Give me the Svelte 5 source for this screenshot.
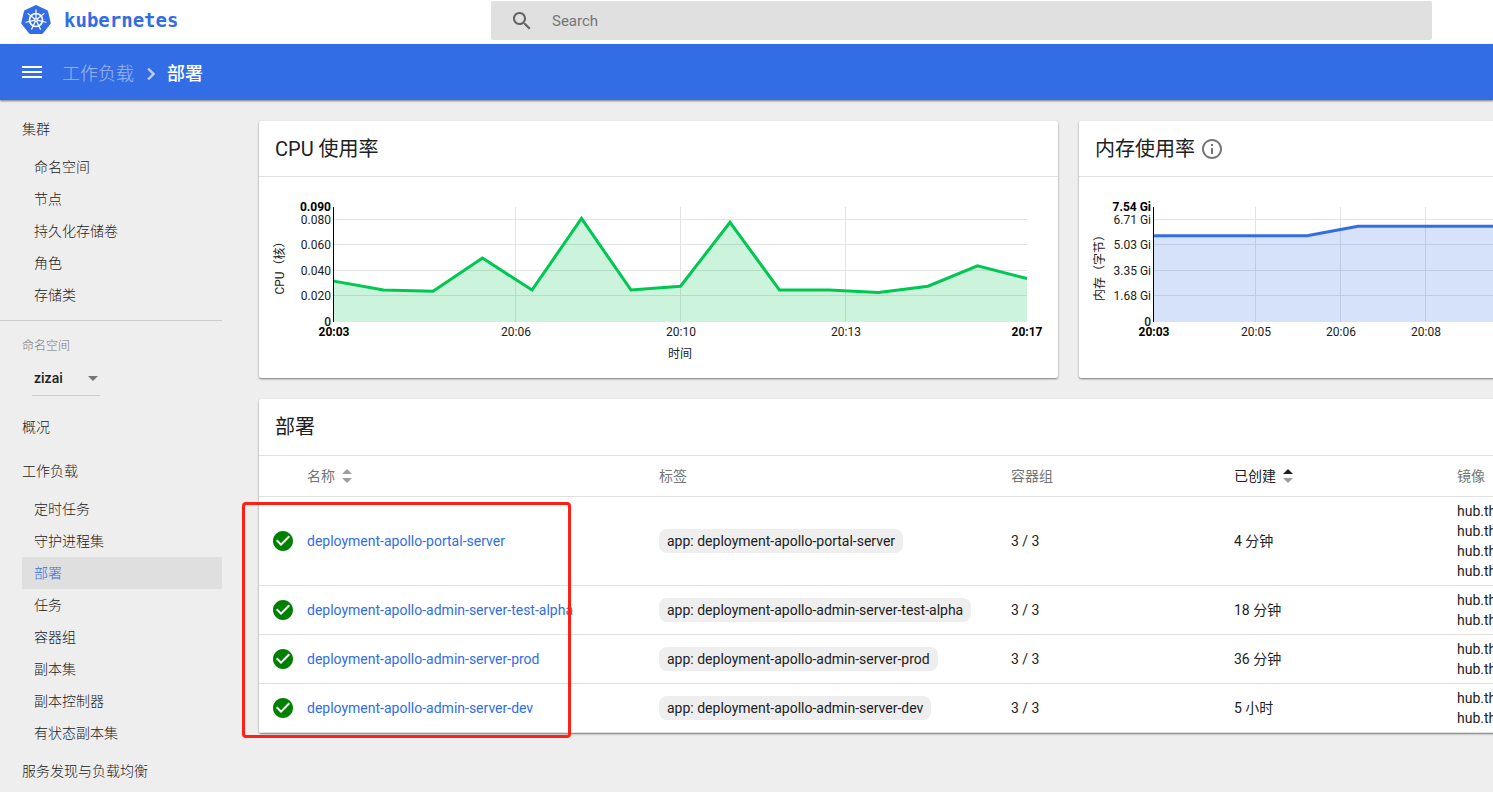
<script>
  const clusterItems = ["命名空间", "节点", "持久化存储卷", "角色", "存储类"];
  const workloadItems = [
    "定时任务",
    "守护进程集",
    "部署",
    "任务",
    "容器组",
    "副本集",
    "副本控制器",
    "有状态副本集",
  ];

  const deployments = [
    { name: "deployment-apollo-portal-server", pods: "3 / 3", age: "4 分钟", images: 4 },
    { name: "deployment-apollo-admin-server-test-alpha", pods: "3 / 3", age: "18 分钟", images: 2 },
    { name: "deployment-apollo-admin-server-prod", pods: "3 / 3", age: "36 分钟", images: 2 },
    { name: "deployment-apollo-admin-server-dev", pods: "3 / 3", age: "5 小时", images: 2 },
  ];

  const cpu = {
    axis: "CPU（核）",
    xAxis: "时间",
    color: "#00c752",
    max: 0.09,
    maxLabel: "0.090",
    step: 49.5,
    values: [
      0.032, 0.025, 0.024, 0.05, 0.025, 0.081, 0.025, 0.028, 0.078, 0.025, 0.025, 0.023, 0.028,
      0.044, 0.034,
    ],
    yTicks: [
      [0.02, "0.020"],
      [0.04, "0.040"],
      [0.06, "0.060"],
      [0.08, "0.080"],
    ],
    xTicks: [
      [182, "20:06"],
      [347, "20:10"],
      [512, "20:13"],
    ],
  };

  const memory = {
    axis: "内存（字节）",
    color: "#326de6",
    max: 7.54,
    maxLabel: "7.54 Gi",
    step: 51,
    values: [5.65, 5.65, 5.65, 5.65, 6.28, 6.27, 6.28, 6.28, 6.27, 6.28, 6.28, 6.27, 6.28, 6.28],
    yTicks: [
      [1.68, "1.68 Gi"],
      [3.35, "3.35 Gi"],
      [5.03, "5.03 Gi"],
      [6.71, "6.71 Gi"],
    ],
    xTicks: [
      [102, "20:05"],
      [187, "20:06"],
      [272, "20:08"],
    ],
  };

  // plot area inside the 799x201 chart
  const left = 75;
  const right = 768;
  const top = 30;
  const bottom = 145;

  const yPos = (chart, v) => bottom - (v / chart.max) * (bottom - top);
  const linePoints = (chart) =>
    chart.values.map((v, i) => `${left + i * chart.step},${yPos(chart, v)}`).join(" ");

  // seven spokes of the logo wheel
  const spokes = [0, 1, 2, 3, 4, 5, 6].map((i) => (i * 360) / 7);

  let active = "部署";
  let namespace = "zizai";
  let search = "";
</script>

<style>
  :global(body) {
    overflow: hidden;
    background: #eee;
  }

  .app {
    height: 100vh;
    display: flex;
    flex-direction: column;
    overflow: hidden;
    font-family: Roboto, "Noto Sans CJK SC", sans-serif;
    font-size: 14px;
    line-height: 20px;
    color: #212121;
  }

  a {
    color: inherit;
    text-decoration: none;
  }

  button,
  input,
  select {
    font: inherit;
    color: inherit;
    border: 0;
    padding: 0;
    background: none;
    outline: none;
  }

  svg {
    display: block;
  }

  header {
    flex: none;
    display: flex;
    align-items: flex-start;
    height: 44px;
    background: #fff;
  }

  .logo {
    display: flex;
    align-items: center;
    gap: 12px;
    width: 471px;
    height: 40px;
    padding-left: 20px;
    box-sizing: border-box;
    color: #326de6;
    font: bold 19px/24px "DejaVu Sans Mono", monospace;
  }

  .search {
    flex: 1;
    display: flex;
    align-items: center;
    gap: 18px;
    height: 39px;
    margin: 1px 61px 0 20px;
    padding-left: 19px;
    border-radius: 2px;
    background: #e0e0e0;
  }

  .search input {
    flex: 1;
    font-size: 15px;
  }

  .search input::placeholder {
    color: #757575;
    opacity: 1;
  }

  .toolbar {
    flex: none;
    position: relative;
    display: flex;
    align-items: center;
    height: 56px;
    padding-left: 20px;
    background: #326de6;
    color: #fff;
    font-size: 18px;
    box-shadow: 0 1px 2px rgba(0, 0, 0, 0.5);
  }

  .toolbar nav {
    display: flex;
    align-items: center;
    margin-left: 18px;
    padding-top: 3px;
  }

  .toolbar nav svg {
    margin: 0 4px 0 5px;
  }

  .parent {
    opacity: 0.5;
    font-weight: 300;
  }

  .current {
    font-weight: 500;
  }

  .content {
    flex: 1;
    display: flex;
    min-height: 0;
  }

  .sidebar {
    flex: none;
    width: 222px;
    padding-top: 7px;
    font-weight: 300;
  }

  .sidebar a {
    display: block;
    margin-left: 22px;
    line-height: 44px;
  }

  .sidebar a.item {
    padding-left: 12px;
    line-height: 32px;
  }

  .sidebar a.active {
    background: #dfdfdf;
    color: #326de6;
  }

  .sidebar hr {
    margin: 9px 0 0;
    border: 0;
    border-top: 1px solid #ccc;
  }

  .namespace {
    display: flex;
    flex-direction: column;
    align-items: flex-start;
    padding: 15px 0 9px 22px;
  }

  .namespace label {
    font-size: 12px;
    color: #757575;
  }

  .select {
    position: relative;
    margin: 5px 0 0 10px;
    border-bottom: 1px solid #ccc;
  }

  .select select {
    appearance: none;
    width: 68px;
    height: 34px;
    padding: 0 0 0 2px;
    font-size: 14px;
    font-weight: 500;
  }

  .select::after {
    content: "";
    position: absolute;
    right: 2px;
    top: 15px;
    border: 5px solid transparent;
    border-top-color: #757575;
    border-bottom: 0;
    pointer-events: none;
  }

  main {
    flex: 1;
    min-width: 0;
    padding: 21px 0 0 37px;
    overflow: hidden;
  }

  .cards {
    display: grid;
    grid-template-columns: repeat(2, minmax(799px, 1fr));
    gap: 21px;
  }

  .card {
    position: relative;
    background: #fff;
    border-radius: 2px;
    box-shadow: 0 1px 2px rgba(0, 0, 0, 0.5);
  }

  .wide {
    grid-column: 1 / -1;
  }

  h2 {
    display: flex;
    align-items: center;
    gap: 5px;
    height: 55px;
    margin: 0;
    padding: 0 16px;
    border-bottom: 1px solid #e0e0e0;
    font-size: 20px;
    font-weight: 400;
  }

  .wide h2 {
    height: 56px;
  }

  .chart {
    width: 100%;
    font-size: 12px;
  }

  .chart text {
    fill: #212121;
  }

  .chart .edge {
    fill: #000;
    font-weight: 700;
  }

  .chart .first {
    font-weight: 500;
  }

  .grid {
    stroke: #e3e3e3;
  }

  .axis {
    stroke: #000;
  }

  table {
    width: 100%;
    table-layout: fixed;
    border-collapse: collapse;
    text-align: left;
  }

  .status {
    width: 48px;
  }

  .col-wide {
    width: 352px;
  }

  .col {
    width: 223px;
  }

  th,
  td {
    padding: 0;
    white-space: nowrap;
  }

  th {
    height: 40px;
    border-bottom: 1px solid #e0e0e0;
    font-weight: 400;
    color: #757575;
  }

  th button {
    display: flex;
    align-items: center;
    gap: 7px;
    cursor: pointer;
  }

  th .sorted {
    color: #212121;
  }

  td {
    padding: 4px 0;
    border-bottom: 1px solid #e0e0e0;
  }

  td:first-child {
    padding-left: 12px;
  }

  td a {
    color: #326de6;
  }

  .chip {
    display: inline-block;
    padding: 2px 8px;
    border-radius: 8px;
    background: #eee;
  }

  .highlight {
    position: absolute;
    left: -17px;
    top: 103px;
    bottom: -5px;
    width: 323px;
    border: 3px solid #ff2116;
    border-radius: 4px;
    pointer-events: none;
  }
</style>

{#snippet sortIcon(up)}
  <svg width="10" height="14" viewBox="0 0 10 14">
    <path d="M0 5L5 0l5 5z" fill={up ? "#212121" : "#9e9e9e"} />
    <path d="M0 9l5 5 5-5z" fill="#9e9e9e" />
  </svg>
{/snippet}

{#snippet lineChart(chart)}
  <svg class="chart" viewBox="0 0 799 201">
    {#each chart.yTicks as [v, label]}
      {@const y = Math.round(yPos(chart, v)) - 0.5}
      <line class="grid" x1={left} x2={right} y1={y} y2={y} />
      <text x={left - 3} y={y + 4} text-anchor="end">{label}</text>
    {/each}
    {#each chart.xTicks as [x, label]}
      <line class="grid" x1={left + x - 0.5} x2={left + x - 0.5} y1={top} y2={bottom} />
      <text x={left + x} y="159" text-anchor="middle">{label}</text>
    {/each}
    <polygon
      points="{left},{bottom} {linePoints(chart)} {right},{bottom}"
      fill={chart.color}
      fill-opacity="0.2"
    />
    <polyline points={linePoints(chart)} fill="none" stroke={chart.color} stroke-width="3" />
    <line class="axis" x1={left - 0.5} x2={left - 0.5} y1={top} y2={bottom} />
    <text class="edge" x={left - 3} y="34" text-anchor="end">{chart.maxLabel}</text>
    <text class="first" x={left - 3} y="149" text-anchor="end">0</text>
    <text class="edge" x={left} y="159" text-anchor="middle">20:03</text>
    <text class="edge" x={right} y="159" text-anchor="middle">20:17</text>
    {#if chart.xAxis}
      <text x="421" y="181" text-anchor="middle">{chart.xAxis}</text>
    {/if}
    <text transform="translate(25 88) rotate(-90)" text-anchor="middle">{chart.axis}</text>
  </svg>
{/snippet}

<div class="app">
  <header>
    <a class="logo" href="#/">
      <svg width="32" height="32" viewBox="-16 -16 32 32" fill="none">
        <path
          d="M0-13.5L10.6-8.4 13.2 3 5.9 12.4H-5.9L-13.2 3-10.6-8.4z"
          fill="#326de6"
          stroke="#326de6"
          stroke-width="3"
          stroke-linejoin="round"
        />
        <g stroke="#fff" stroke-linecap="round">
          <circle r="6.5" stroke-width="1.7" />
          {#each spokes as angle}
            <path d="M0-2V-10.2" stroke-width="1.2" transform="rotate({angle})" />
          {/each}
        </g>
        <circle r="2" fill="#fff" />
        <circle r="0.8" fill="#326de6" />
      </svg>
      <span>kubernetes</span>
    </a>
    <div class="search">
      <svg width="24" height="24" viewBox="0 0 24 24" fill="#616161">
        <path
          d="M15.5 14h-.79l-.28-.27C15.41 12.59 16 11.11 16 9.5 16 5.91 13.09 3 9.5 3S3 5.91 3 9.5 5.91 16 9.5 16c1.61 0 3.09-.59 4.23-1.57l.27.28v.79l5 4.99L20.49 19l-4.99-5zm-6 0C7.01 14 5 11.99 5 9.5S7.01 5 9.5 5 14 7.01 14 9.5 11.99 14 9.5 14z"
        />
      </svg>
      <input type="text" placeholder="Search" aria-label="Search" bind:value={search} />
    </div>
  </header>

  <div class="toolbar">
    <button aria-label="菜单">
      <svg width="24" height="24" viewBox="0 0 24 24" fill="#fff">
        <path d="M2 18h20v-2H2v2zm0-5h20v-2H2v2zm0-7v2h20V6H2z" />
      </svg>
    </button>
    <nav>
      <a class="parent" href="#/workload">工作负载</a>
      <svg width="24" height="24" viewBox="0 0 24 24" fill="#b9cdf7">
        <path d="M8.3 16.6L12.9 12 8.3 7.4 10 5.700l6.300 6.300-6.300 6.300z" />
      </svg>
      <span class="current">部署</span>
    </nav>
  </div>

  <div class="content">
    <nav class="sidebar">
      <a href="#/cluster">集群</a>
      {#each clusterItems as item}
        <a class="item" href="#/{item}">{item}</a>
      {/each}
      <hr />
      <div class="namespace">
        <label for="namespace">命名空间</label>
        <div class="select">
          <select id="namespace" bind:value={namespace}>
            <option value="zizai">zizai</option>
          </select>
        </div>
      </div>
      <a href="#/overview">概况</a>
      <a href="#/workload">工作负载</a>
      {#each workloadItems as item}
        <a
          class="item"
          class:active={item === active}
          href="#/{item}"
          on:click={() => (active = item)}>{item}</a
        >
      {/each}
      <a href="#/discovery">服务发现与负载均衡</a>
    </nav>

    <main>
      <div class="cards">
        <section class="card">
          <h2>CPU 使用率</h2>
          {@render lineChart(cpu)}
        </section>

        <section class="card">
          <h2>
            内存使用率
            <svg width="24" height="24" viewBox="0 0 24 24" fill="#757575">
              <path
                d="M11 17h2v-6h-2v6zm1-15C6.48 2 2 6.48 2 12s4.48 10 10 10 10-4.48 10-10S17.52 2 12 2zm0 18c-4.41 0-8-3.59-8-8s3.59-8 8-8 8 3.59 8 8-3.59 8-8 8zM11 9h2V7h-2v2z"
              />
            </svg>
          </h2>
          {@render lineChart(memory)}
        </section>

        <section class="card wide">
          <h2>部署</h2>
          <table>
            <thead>
              <tr>
                <th class="status"></th>
                <th class="col-wide"><button>名称 {@render sortIcon(false)}</button></th>
                <th class="col-wide">标签</th>
                <th class="col">容器组</th>
                <th class="col"><button class="sorted">已创建 {@render sortIcon(true)}</button></th>
                <th>镜像</th>
              </tr>
            </thead>
            <tbody>
              {#each deployments as d}
                <tr>
                  <td>
                    <svg width="24" height="24" viewBox="0 0 24 24" fill="#008000">
                      <path
                        d="M12 2C6.48 2 2 6.48 2 12s4.48 10 10 10 10-4.48 10-10S17.52 2 12 2zm-2 15l-5-5 1.410-1.410L10 14.170l7.590-7.590L19 8l-9 9z"
                      />
                    </svg>
                  </td>
                  <td><a href="#/deployment/{d.name}">{d.name}</a></td>
                  <td><span class="chip">app: {d.name}</span></td>
                  <td>{d.pods}</td>
                  <td>{d.age}</td>
                  <td>
                    {#each Array(d.images) as _}
                      <div>hub.th</div>
                    {/each}
                  </td>
                </tr>
              {/each}
            </tbody>
          </table>
          <div class="highlight"></div>
        </section>
      </div>
    </main>
  </div>
</div>
